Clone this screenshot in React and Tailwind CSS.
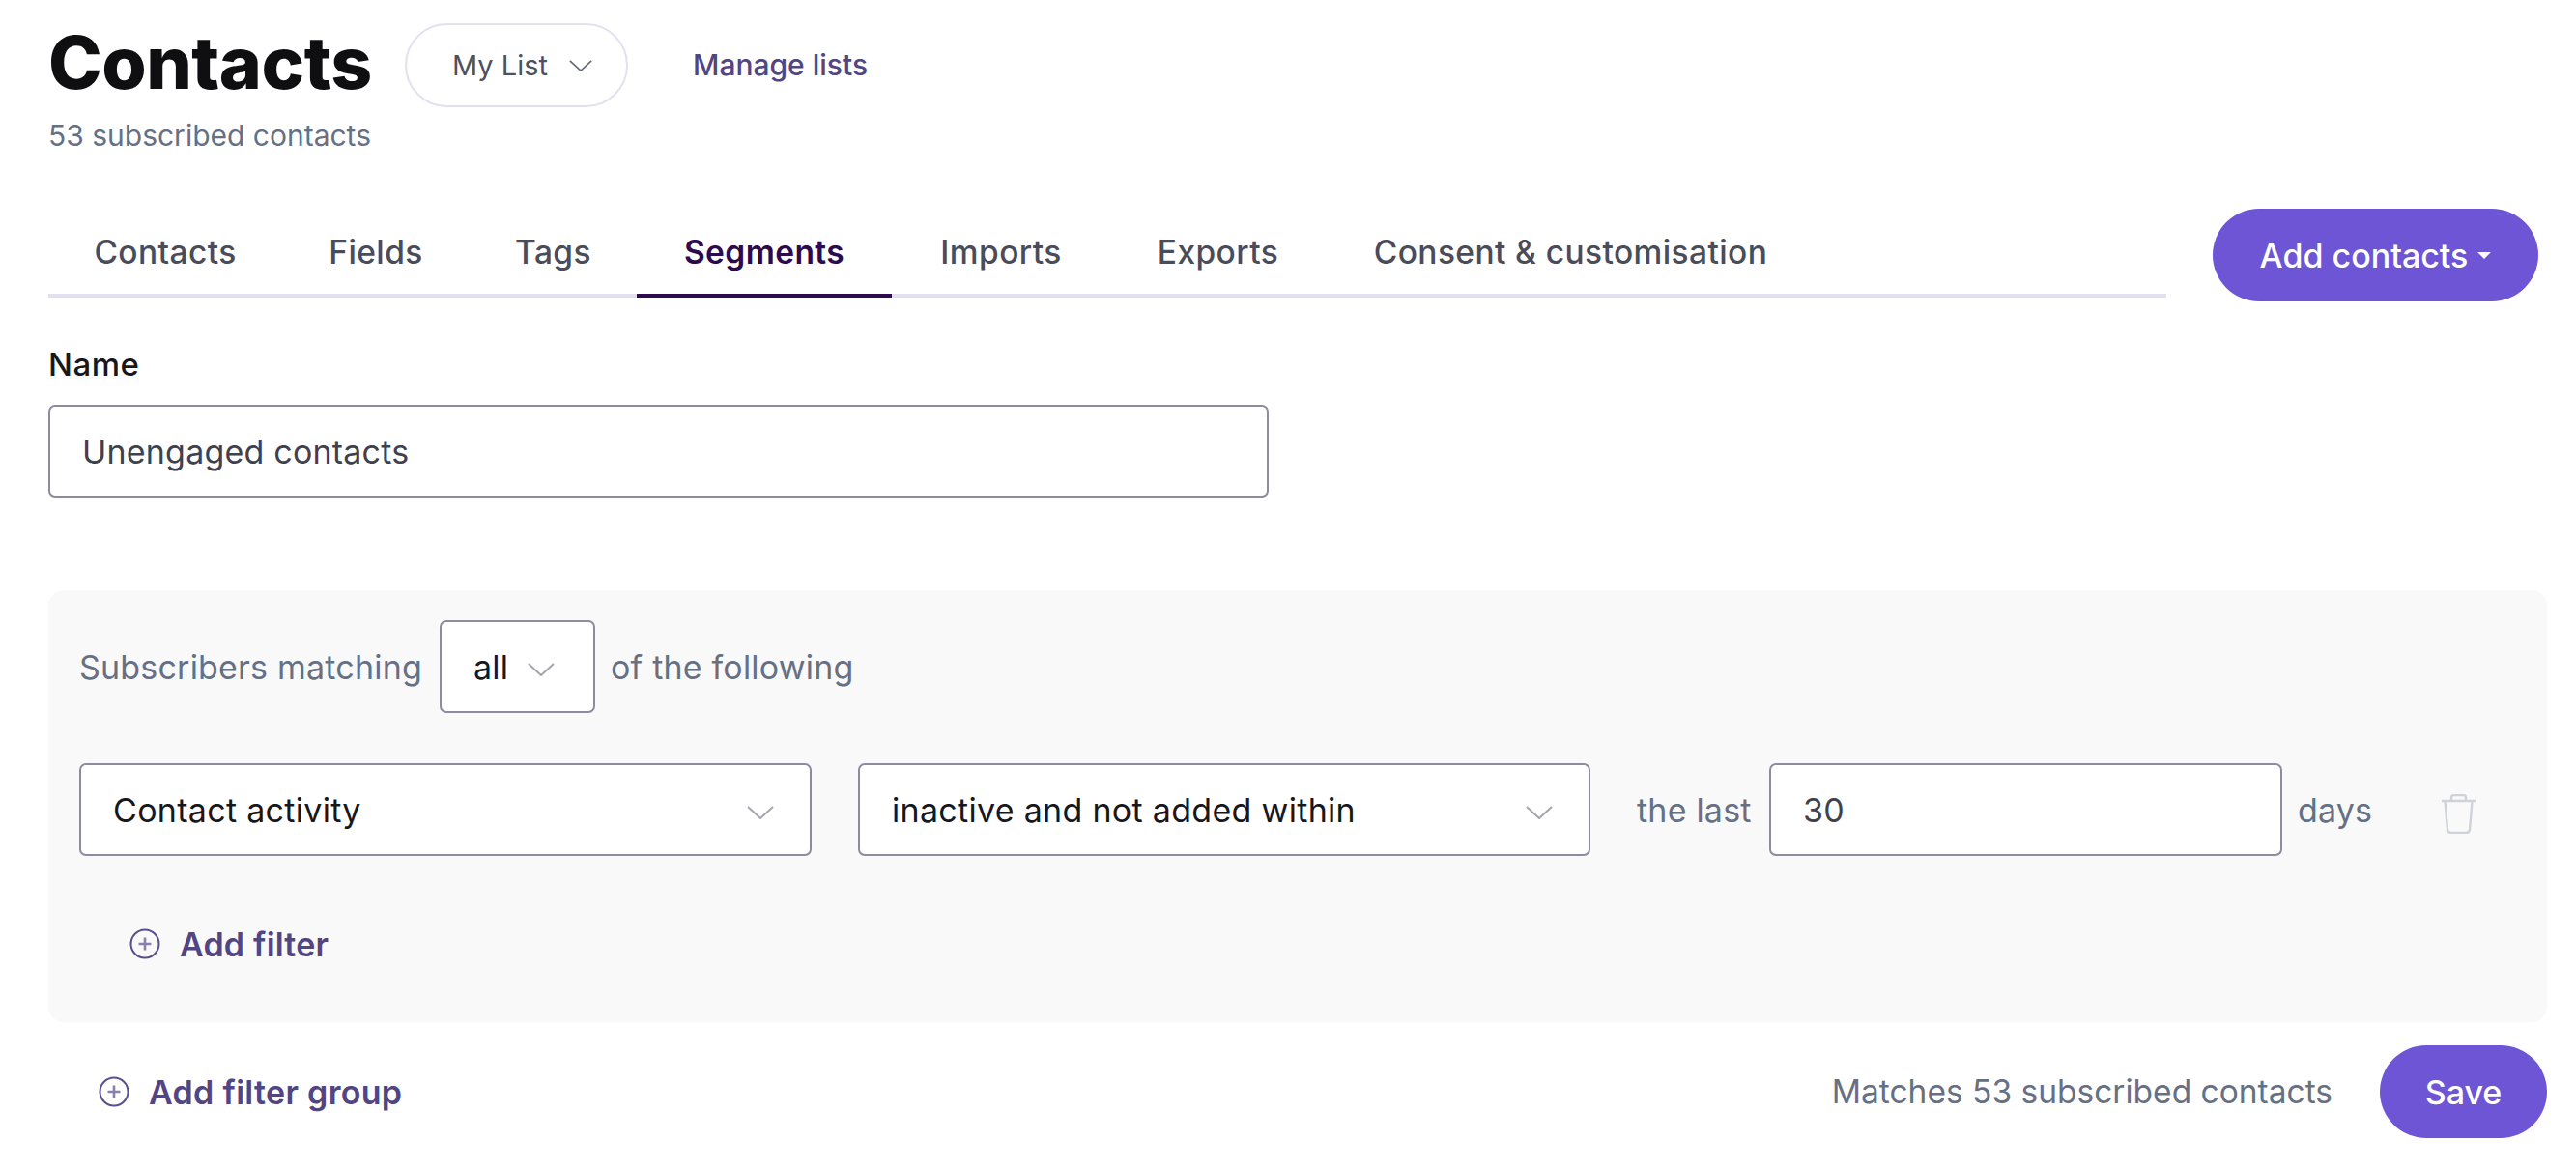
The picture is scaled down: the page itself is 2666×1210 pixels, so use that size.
import React from "react";

const Chevron = ({ className }) => (
  <svg viewBox="0 0 28 14" fill="none" className={className}>
    <path d="M1 1 L14 13 L27 1" stroke="currentColor" strokeWidth="2" />
  </svg>
);

const PlusCircle = () => (
  <svg viewBox="0 0 32 32" fill="none" className="w-[32px] h-[32px] text-[#5a4e8e]">
    <circle cx="16" cy="16" r="14.5" stroke="currentColor" strokeWidth="2" />
    <path d="M16 9.5 V22.5 M9.5 16 H22.5" stroke="#8a80b0" strokeWidth="2.6" />
  </svg>
);

const Trash = () => (
  <svg viewBox="0 0 35 41" fill="none" className="mt-[9px] w-[35px] h-[41px] text-[#d0d2d9]">
    <path d="M0 7 H35 M10 7 V3.5 Q10 1 12.5 1 H22.5 Q25 1 25 3.5 V7 M3.5 7 L6 37 Q6.5 40 10 40 H25 Q28.5 40 29 37 L31.5 7" stroke="currentColor" strokeWidth="2.4" />
  </svg>
);

const Select = ({ label, width }) => (
  <div className={`flex items-center justify-between h-[96px] ${width} pl-[33px] pr-[37px] bg-white border-2 border-[#8c8ba0] rounded-[7px] text-[34px] tracking-[0.3px] text-[#17171c]`}>
    <span>{label}</span>
    <Chevron className="mt-[5px] w-[28px] h-[14px] text-[#a5a5ad]" />
  </div>
);

const tabs = [
  { label: "Contacts", width: "w-[242px]" },
  { label: "Fields", width: "w-[194px]" },
  { label: "Tags", width: "w-[173px]" },
  { label: "Segments", width: "w-[264px]" },
  { label: "Imports", width: "w-[226px]" },
  { label: "Exports", width: "w-[223px]" },
  { label: "Consent & customisation", width: "w-[507px]" },
];

export default function App() {
  return (
    <div className="w-[2666px] h-[1210px] bg-white pl-[50px] pt-[24px] font-['Inter',sans-serif] overflow-hidden">
      <div className="flex items-center h-[87px]">
        <h1 className="w-[334px] mt-[-6px] text-[75px] leading-none font-extrabold text-[#0f0f12] tracking-[-0.5px] whitespace-nowrap">Contacts</h1>
        <button className="ml-[35px] flex items-center w-[231px] h-[87px] pl-[47px] rounded-full border-2 border-[#e3e1ee] text-[29px] text-[#4e5160]">
          My List
          <Chevron className="ml-[22px] w-[24px] h-[12px] text-[#6a6d7a]" />
        </button>
        <a className="ml-[67px] text-[30px] font-medium text-[#514584]">Manage lists</a>
      </div>
      <div className="mt-[12px] text-[30px] leading-[34px] text-[#667085]">53 subscribed contacts</div>

      <div className="mt-[59px] w-[2577px] flex items-start">
        <div className="flex-1 flex h-[92px] border-b-4 border-[#e2e0ee]">
          {tabs.map((t) => (
            <div
              key={t.label}
              className={`${t.width} h-[92px] pt-[27px] text-center text-[33.5px] leading-[36px] tracking-[0.4px] whitespace-nowrap ${
                t.label === "Segments" ? "font-semibold text-[#2d0a4e] border-b-4 border-[#2d0a4e]" : "font-medium text-[#4a4c59]"
              }`}
            >
              {t.label}
            </div>
          ))}
        </div>
        <button className="ml-[48px] w-[337px] h-[96px] rounded-full bg-[#6e55d6] text-white text-[34px] font-medium flex items-center justify-center gap-[10px]">
          Add contacts
          <span className="w-0 h-0 border-x-[7px] border-x-transparent border-t-[7px] border-t-white" />
        </button>
      </div>

      <div className="mt-[47px] text-[33px] leading-[36px] font-medium tracking-[0.5px] text-[#17171c]">Name</div>
      <div className="mt-[24px] w-[1263px] h-[96px] flex items-center pl-[33px] border-2 border-[#8c8ba0] rounded-[7px] text-[34px] tracking-[0.2px] text-[#3f414d]">
        Unengaged contacts
      </div>

      <div className="mt-[96px] w-[2586px] h-[447px] bg-[#f9f9f9] rounded-[16px] px-[32px] pt-[31px]">
        <div className="flex items-center text-[34px] tracking-[0.2px] text-[#667085]">
          <span className="w-[373px] whitespace-nowrap">Subscribers matching</span>
          <div className="flex items-center w-[161px] h-[96px] pl-[33px] bg-white border-2 border-[#8c8ba0] rounded-[7px] text-[#17171c]">
            all
            <Chevron className="ml-[20px] mt-[5px] w-[28px] h-[14px] text-[#a5a5ad]" />
          </div>
          <span className="ml-[16px]">of the following</span>
        </div>
        <div className="mt-[52px] flex items-center text-[34px] tracking-[0.2px] text-[#667085]">
          <Select label="Contact activity" width="w-[758px]" />
          <div className="ml-[48px]">
            <Select label="inactive and not added within" width="w-[758px]" />
          </div>
          <span className="ml-[48px] w-[137px] whitespace-nowrap">the last</span>
          <div className="w-[531px] h-[96px] flex items-center pl-[33px] bg-white border-2 border-[#8c8ba0] rounded-[7px] text-[#3f414d]">30</div>
          <span className="ml-[16px] w-[149px]">days</span>
          <Trash />
        </div>
        <div className="mt-[71px] ml-[52px] h-[40px] flex items-center gap-[20px] text-[34px] tracking-[0.2px] font-semibold text-[#514584]">
          <PlusCircle />
          Add filter
        </div>
      </div>

      <div className="mt-[24px] w-[2586px] h-[96px] flex items-center pl-[52px]">
        <div className="flex items-center gap-[20px] text-[34px] tracking-[0.3px] font-semibold text-[#514584]">
          <PlusCircle />
          Add filter group
        </div>
        <span className="ml-auto text-[33.5px] text-[#667085]">Matches 53 subscribed contacts</span>
        <button className="ml-[49px] w-[173px] h-[96px] rounded-full bg-[#6e55d6] text-white text-[34px] font-medium">Save</button>
      </div>
    </div>
  );
}
